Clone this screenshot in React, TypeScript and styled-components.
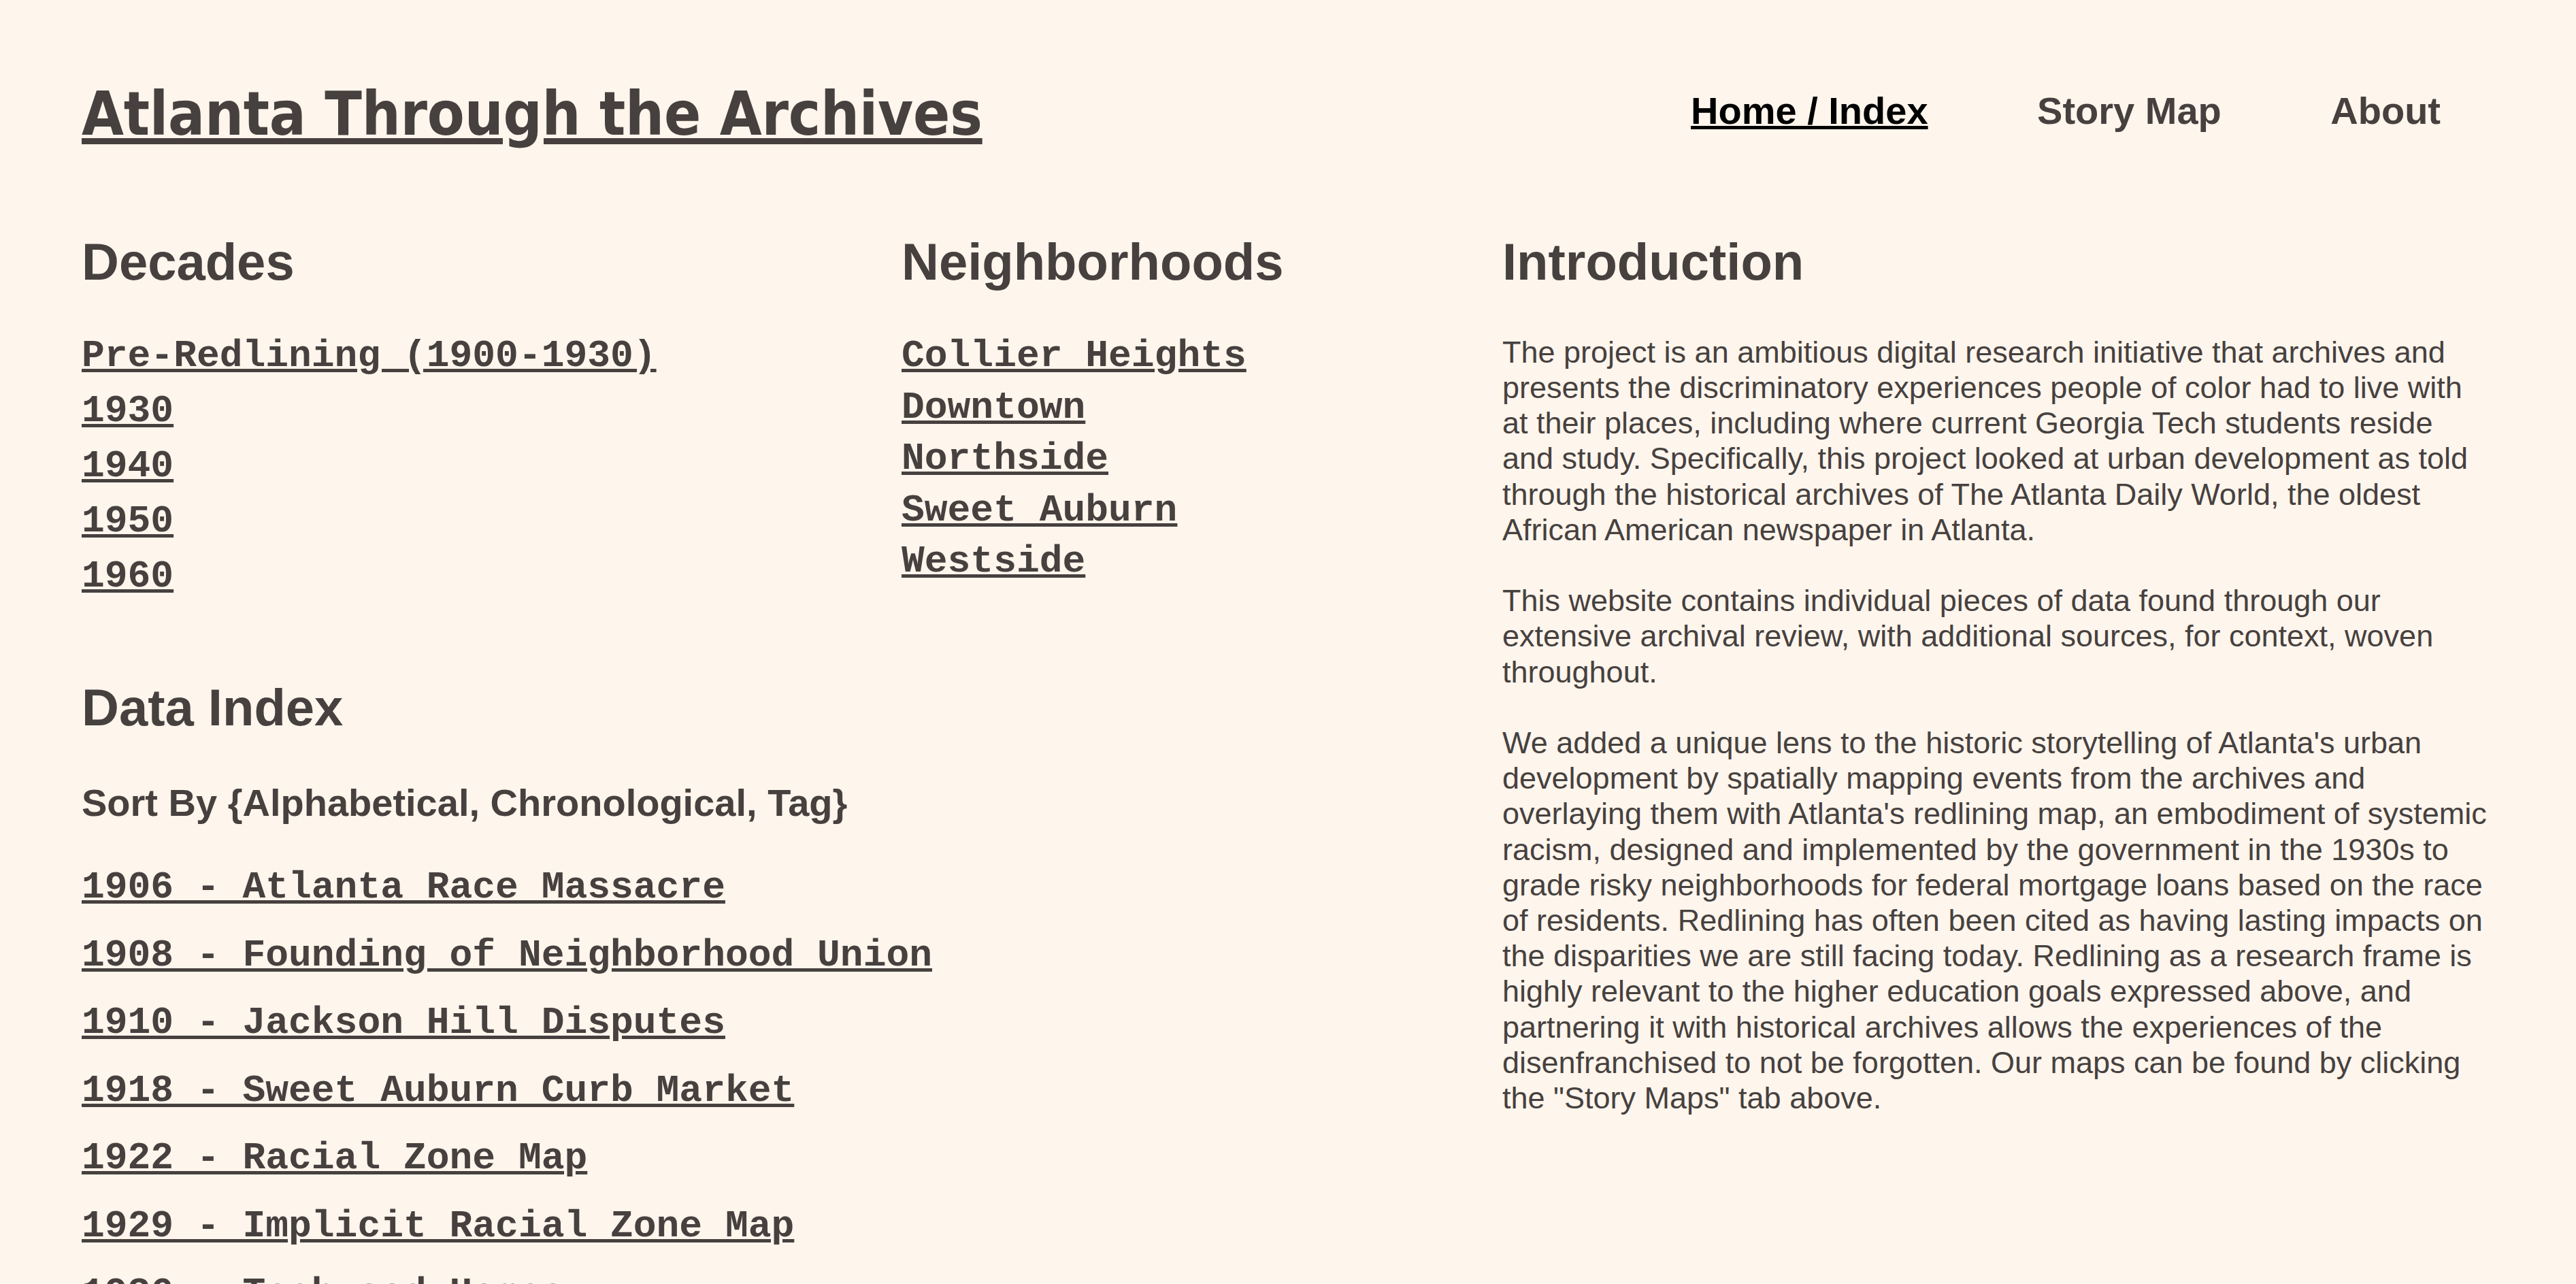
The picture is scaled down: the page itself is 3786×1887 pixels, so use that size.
import React from "react";
import styled, { createGlobalStyle } from "styled-components";

const ink = "#46413f";

const GlobalStyle = createGlobalStyle`
  html, body {
    margin: 0;
    padding: 0;
    background: #fef5ec;
  }
  body {
    font-family: "Liberation Sans", Arial, sans-serif;
    color: ${ink};
  }
`;

const Page = styled.div`
  min-height: 100vh;
  background: #fef5ec;
  padding: 0 120px;
`;

const Header = styled.header`
  display: flex;
  justify-content: space-between;
  align-items: flex-start;
  padding-top: 114px;
`;

const SiteTitle = styled.a`
  display: block;
  font-family: "DejaVu Sans Condensed", "DejaVu Sans", sans-serif;
  font-stretch: semi-condensed;
  font-weight: 700;
  font-size: 89px;
  letter-spacing: -0.2px;
  line-height: 107px;
  color: ${ink};
  text-decoration: underline;
  text-decoration-thickness: 9px;
  text-underline-offset: 5px;
  white-space: nowrap;
`;

const Nav = styled.nav`
  display: flex;
  gap: 160.5px;
  margin-top: 16.6px;
  margin-right: 79px;
`;

const NavLink = styled.a<{ $active?: boolean }>`
  font-family: "Liberation Sans", Arial, sans-serif;
  font-weight: 700;
  font-size: 56px;
  line-height: 64px;
  color: ${(p) => (p.$active ? "#000" : ink)};
  text-decoration: ${(p) => (p.$active ? "underline" : "none")};
  text-decoration-thickness: 5px;
  text-underline-offset: 3px;
  white-space: nowrap;
`;

const Main = styled.main`
  display: grid;
  grid-template-columns: 2088px 1fr;
  margin-top: 120px;
  align-items: start;
`;

const LeftColumn = styled.div`
  display: grid;
  grid-template-columns: 1205px 1fr;
  align-items: start;
`;

const Section = styled.section<{ $span?: boolean; $top?: number }>`
  grid-column: ${(p) => (p.$span ? "1 / -1" : "auto")};
  margin-top: ${(p) => p.$top ?? 0}px;
`;

const IntroSection = styled.section`
  max-width: 1452px;
`;

const SectionHeading = styled.h2<{ $after: number }>`
  margin: 0 0 ${(p) => p.$after}px 0;
  font-family: "Liberation Sans", Arial, sans-serif;
  font-weight: 700;
  font-size: 76px;
  line-height: 87.4px;
  color: ${ink};
`;

const SortLabel = styled.h3`
  margin: 0 0 43px 0;
  font-family: "Liberation Sans", Arial, sans-serif;
  font-weight: 700;
  font-size: 56px;
  line-height: 64px;
  color: ${ink};
`;

const LinkList = styled.ul`
  list-style: none;
  margin: 0;
  padding: 0;
`;

const LinkItem = styled.li<{ $lh: number }>`
  font-family: "Liberation Mono", "Courier New", monospace;
  font-weight: 700;
  font-size: 56.3px;
  line-height: ${(p) => p.$lh}px;
  white-space: nowrap;
`;

const ListLink = styled.a`
  font: inherit;
  color: ${ink};
  text-decoration: underline;
  text-decoration-thickness: 4.5px;
  text-underline-offset: 4px;
`;

const IntroBody = styled.div`
  margin-top: 63.4px;
  display: flex;
  flex-direction: column;
  gap: 52.2px;
`;

const IntroText = styled.p`
  margin: 0;
  font-family: "Liberation Sans", Arial, sans-serif;
  font-size: 45px;
  line-height: 52.2px;
  color: ${ink};
`;

const decades = ["Pre-Redlining (1900-1930)", "1930", "1940", "1950", "1960"];
const neighborhoods = ["Collier Heights", "Downtown", "Northside", "Sweet Auburn", "Westside"];
const dataItems = [
  "1906 - Atlanta Race Massacre",
  "1908 - Founding of Neighborhood Union",
  "1910 - Jackson Hill Disputes",
  "1918 - Sweet Auburn Curb Market",
  "1922 - Racial Zone Map",
  "1929 - Implicit Racial Zone Map",
  "1936 - Techwood Homes",
  "1938 - Atlanta Redlining Map",
];

const paragraphs = [
  "The project is an ambitious digital research initiative that archives and presents the discriminatory experiences people of color had to live with at their places, including where current Georgia Tech students reside and study. Specifically, this project looked at urban development as told through the historical archives of The Atlanta Daily World, the oldest African American newspaper in Atlanta.",
  "This website contains individual pieces of data found through our extensive archival review, with additional sources, for context, woven throughout.",
  "We added a unique lens to the historic storytelling of Atlanta's urban development by spatially mapping events from the archives and overlaying them with Atlanta's redlining map, an embodiment of systemic racism, designed and implemented by the government in the 1930s to grade risky neighborhoods for federal mortgage loans based on the race of residents. Redlining has often been cited as having lasting impacts on the disparities we are still facing today. Redlining as a research frame is highly relevant to the higher education goals expressed above, and partnering it with historical archives allows the experiences of the disenfranchised to not be forgotten. Our maps can be found by clicking the \"Story Maps\" tab above.",
];

export default function App() {
  return (
    <>
      <GlobalStyle />
      <Page>
        <Header>
          <SiteTitle href="#">Atlanta Through the Archives</SiteTitle>
          <Nav>
            <NavLink href="#" $active>
              Home / Index
            </NavLink>
            <NavLink href="#">Story Map</NavLink>
            <NavLink href="#">About</NavLink>
          </Nav>
        </Header>
        <Main>
          <LeftColumn>
            <Section>
              <SectionHeading $after={55}>Decades</SectionHeading>
              <LinkList>
                {decades.map((d) => (
                  <LinkItem key={d} $lh={81}>
                    <ListLink href="#">{d}</ListLink>
                  </LinkItem>
                ))}
              </LinkList>
            </Section>
            <Section>
              <SectionHeading $after={58}>Neighborhoods</SectionHeading>
              <LinkList>
                {neighborhoods.map((n) => (
                  <LinkItem key={n} $lh={75.5}>
                    <ListLink href="#">{n}</ListLink>
                  </LinkItem>
                ))}
              </LinkList>
            </Section>
            <Section $span $top={108}>
              <SectionHeading $after={64.2}>Data Index</SectionHeading>
              <SortLabel>Sort By {"{"}Alphabetical, Chronological, Tag{"}"}</SortLabel>
              <LinkList>
                {dataItems.map((d) => (
                  <LinkItem key={d} $lh={99.5}>
                    <ListLink href="#">{d}</ListLink>
                  </LinkItem>
                ))}
              </LinkList>
            </Section>
          </LeftColumn>
          <IntroSection>
            <SectionHeading $after={0}>Introduction</SectionHeading>
            <IntroBody>
              {paragraphs.map((p, i) => (
                <IntroText key={i}>{p}</IntroText>
              ))}
            </IntroBody>
          </IntroSection>
        </Main>
      </Page>
    </>
  );
}
